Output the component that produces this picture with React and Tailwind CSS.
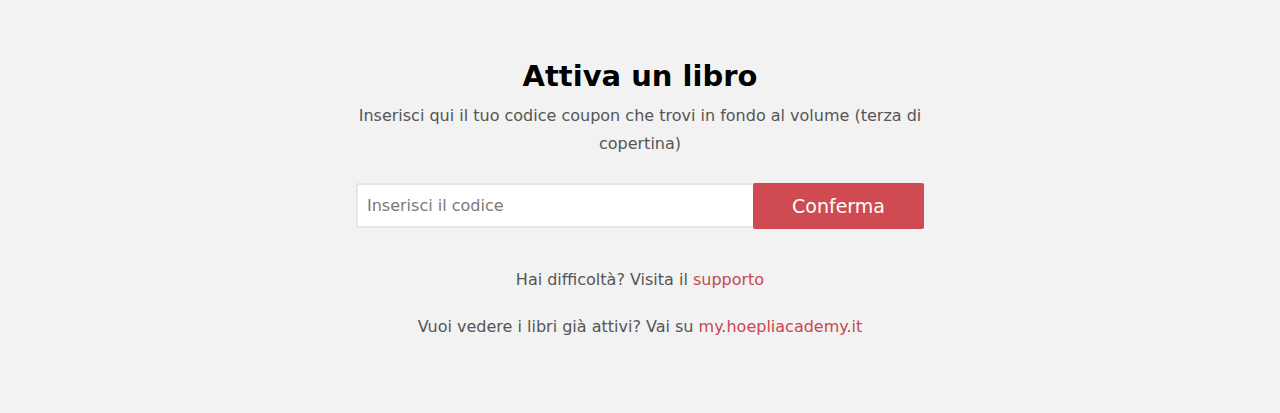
export default function App() {
    return (
        <div className="min-h-[413px] w-full bg-[#f2f2f2] font-['DejaVu_Sans',sans-serif]">
            <div className="mx-auto flex w-[568px] flex-col items-center pt-[54px]">
                <h1 className="text-[29px] font-bold leading-[44px] text-black">Attiva un libro</h1>
                <p className="mt-[4px] text-center text-[16px] leading-[28px] text-[#555]">
                    Inserisci qui il tuo codice coupon che trovi in fondo al volume (terza di copertina)
                </p>

                <form className="mt-[25px] flex w-full" onSubmit={(e) => e.preventDefault()}>
                    <input
                        type="text"
                        placeholder="Inserisci il codice"
                        className="h-[45px] flex-1 rounded-l-[2px] border-2 border-r-0 border-[#e6e6e6] bg-white px-[9px] text-[16px] text-[#333] placeholder:text-[#7a7a7a] outline-none"
                    />
                    <button
                        type="submit"
                        className="h-[46px] w-[171px] rounded-[2px] bg-[#d04a52] text-[19px] text-white"
                    >
                        Conferma
                    </button>
                </form>

                <p className="mt-[39px] text-[16px] leading-[24px] text-[#555]">
                    Hai difficoltà? Visita il <a href="#" className="text-[#c9474f]">supporto</a>
                </p>
                <p className="mt-[23px] text-[16px] leading-[24px] text-[#555]">
                    Vuoi vedere i libri già attivi? Vai su <a href="#" className="text-[#c9474f]">my.hoepliacademy.it</a>
                </p>
            </div>
        </div>
    );
}
